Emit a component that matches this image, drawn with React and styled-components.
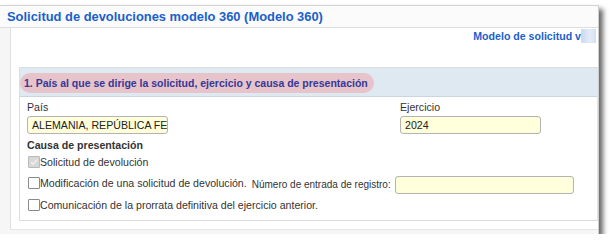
import React from 'react'
import styled, { createGlobalStyle } from 'styled-components'

const GlobalStyle = createGlobalStyle`
    body {
        margin: 0;
        background: #fff;
        font-family: "Liberation Sans", Arial, sans-serif;
    }
`

const Window = styled.div`
    margin-top: 5px;
    width: 598px;
    height: 228px;
    background: #f6f6f6;
    border-top: 1px solid #d2d2d2;
    border-right: 1px solid #cfcfcf;
    box-shadow: 4px 4px 5px rgba(0, 0, 0, 0.6);
    display: flex;
    flex-direction: column;
`

const Title = styled.h1`
    margin: 0;
    height: 20px;
    padding: 1px 0 0 7px;
    font-size: 12.9px;
    line-height: 20px;
    font-weight: bold;
    color: #1a5fcc;
    background: #fbfbfb;
    border-bottom: 1px solid #dedede;
`

const Body = styled.div`
    flex: 1;
    display: flex;
    padding: 0 0 4px 10px;
`

const Panel = styled.div`
    flex: 1;
    background: #fff;
    border-left: 1px solid #e0e0e0;
    border-bottom: 1px solid #e6e6e6;
    display: flex;
    flex-direction: column;
`

const LinkRow = styled.div`
    display: flex;
    justify-content: flex-end;
    align-items: center;
    height: 14px;
    padding: 1px 2px 2px 0;
    font-size: 10.6px;
    font-weight: bold;
    color: #1a5fcc;
`

const Blur = styled.span`
    display: inline-block;
    width: 15px;
    height: 14px;
    background: linear-gradient(90deg, #c9d9f2, #e4ecf8 60%, #d2e0f4);
`

const Section = styled.section`
    margin: 22px 0 0 8px;
    height: 152px;
    border: 1px solid #dcdcdc;
    border-right-color: #e4e4e4;
`

const SectionHead = styled.div`
    height: 28px;
    background: #dfe9f1;
    border-bottom: 1px solid #c9d6e0;
    display: flex;
    align-items: center;
`

const Pill = styled.span`
    margin-top: 2px;
    height: 20px;
    line-height: 20px;
    padding: 0 6px 0 4px;
    border-radius: 10px;
    background: #e7c4c9;
    color: #35379a;
    font-size: 10.5px;
    font-weight: bold;
`

const SectionBody = styled.div`
    padding: 3px 0 0 7px;
    font-size: 10.6px;
    color: #333;
`

const FieldGrid = styled.div`
    display: grid;
    grid-template-columns: 373px 1fr;
`

const Field = styled.div`
    display: flex;
    flex-direction: column;
    gap: 2px;
`

const Label = styled.span`
    line-height: 14px;
`

const TextInput = styled.div`
    width: ${p => p.width}px;
    height: 16px;
    box-sizing: content-box;
    border: 1px solid #b4b4b4;
    border-radius: 3px;
    background: #ffffdb;
    padding: 0 0 0 4px;
    line-height: 16px;
    font-size: 10.6px;
    color: #222;
    white-space: nowrap;
    overflow: hidden;
    box-shadow: inset 0 0 1px rgba(0, 0, 0, 0.1);
`

const Subhead = styled.div`
    margin-top: 4px;
    font-weight: bold;
    line-height: 14px;
`

const CheckRow = styled.div`
    display: flex;
    align-items: center;
    height: ${p => p.height || 22}px;
    padding-left: 1px;
    white-space: nowrap;
`

const Box = styled.span`
    width: 10px;
    height: 10px;
    border: 1px solid ${p => (p.disabled ? '#b8b8b8' : '#8a8a8a')};
    background: ${p => (p.disabled ? '#d8d8d8' : '#fff')};
    border-radius: 1px;
    display: flex;
    align-items: center;
    justify-content: center;
    flex: none;
`

const Extra = styled.span`
    display: flex;
    align-items: center;
    margin-left: 5px;
    padding-top: 3px;
    gap: 4px;
    font-size: 10px;
`

const Check = ({ checked, disabled }) => (
    <Box disabled={disabled}>
        {checked && (
            <svg width="8" height="8" viewBox="0 0 8 8">
                <path d="M1 4.2 L3.1 6.3 L7 1.6" fill="none" stroke="#f2f2f2" strokeWidth="1.4" />
            </svg>
        )}
    </Box>
)

const App = () => {
    return (
        <>
            <GlobalStyle />
            <Window>
                <Title>Solicitud de devoluciones modelo 360 (Modelo 360)</Title>
                <Body>
                    <Panel>
                        <LinkRow>
                            Modelo de solicitud v<Blur />
                        </LinkRow>
                        <Section>
                            <SectionHead>
                                <Pill>1. País al que se dirige la solicitud, ejercicio y causa de presentación</Pill>
                            </SectionHead>
                            <SectionBody>
                                <FieldGrid>
                                    <Field>
                                        <Label>País</Label>
                                        <TextInput width={135}>ALEMANIA, REPÚBLICA FEDERAL</TextInput>
                                    </Field>
                                    <Field>
                                        <Label>Ejercicio</Label>
                                        <TextInput width={135}>2024</TextInput>
                                    </Field>
                                </FieldGrid>
                                <Subhead>Causa de presentación</Subhead>
                                <CheckRow height={19}>
                                    <Check checked disabled />
                                    Solicitud de devolución
                                </CheckRow>
                                <CheckRow height={24}>
                                    <Check />
                                    Modificación de una solicitud de devolución.
                                    <Extra>
                                        Número de entrada de registro:
                                        <TextInput width={173} />
                                    </Extra>
                                </CheckRow>
                                <CheckRow height={20}>
                                    <Check />
                                    Comunicación de la prorrata definitiva del ejercicio anterior.
                                </CheckRow>
                            </SectionBody>
                        </Section>
                    </Panel>
                </Body>
            </Window>
        </>
    )
}

export default App
